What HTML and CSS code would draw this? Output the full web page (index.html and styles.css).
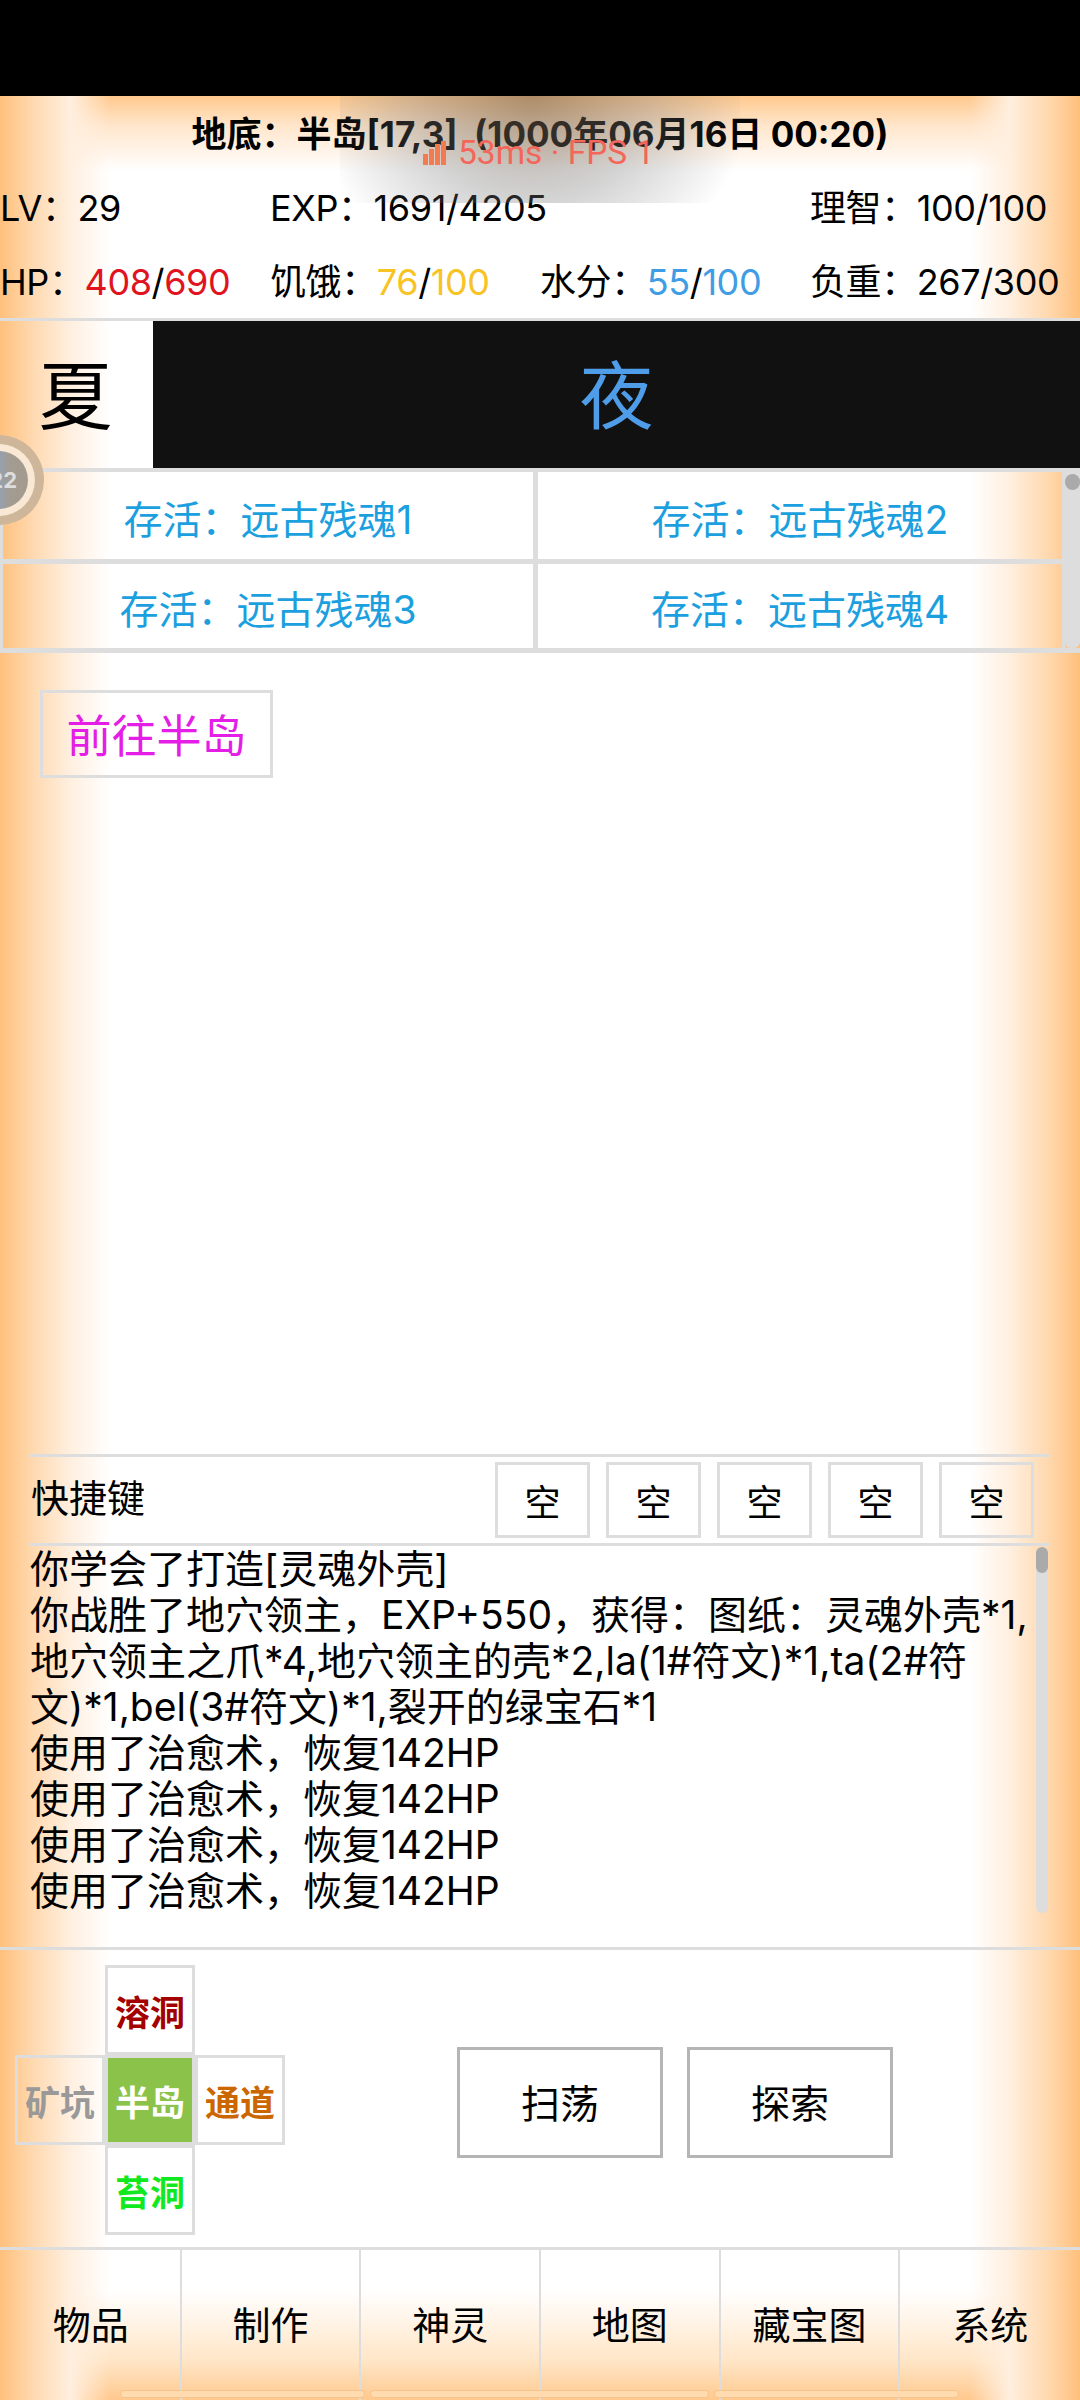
FILE: index.html
```html
<!DOCTYPE html>
<html lang="zh">
<head>
    <meta charset="UTF-8">
    <meta name="viewport" content="width=device-width, initial-scale=1.0">
    <title>地底</title>
    <link rel="stylesheet" href="styles.css">
</head>
<body>
    <div class="topbar"></div>
    <div class="page">
        <div class="title">地底：半岛[17,3]&nbsp; (1000年06月16日 00:20)</div>
        <div class="stats">
            <div>LV：29</div>
            <div class="wide">EXP：1691/4205</div>
            <div>理智：100/100</div>
            <div>HP：<span class="red">408</span>/<span class="red">690</span></div>
            <div>饥饿：<span class="yellow">76</span>/<span class="yellow">100</span></div>
            <div>水分：<span class="blue">55</span>/<span class="blue">100</span></div>
            <div>负重：267/300</div>
        </div>
        <div class="season">
            <div class="season-name">夏</div>
            <div class="daytime">夜</div>
        </div>
        <div class="tasks">
            <div class="task-grid">
                <div class="task">存活：远古残魂1</div>
                <div class="task">存活：远古残魂2</div>
                <div class="task">存活：远古残魂3</div>
                <div class="task">存活：远古残魂4</div>
            </div>
            <div class="scroll-y"><div class="thumb-small"></div></div>
        </div>
        <div class="main">
            <div class="go-btn">前往半岛</div>
        </div>
        <div class="shortcut">
            <div class="shortcut-label">快捷键</div>
            <div class="slots">
                <div class="slot">空</div>
                <div class="slot">空</div>
                <div class="slot">空</div>
                <div class="slot">空</div>
                <div class="slot">空</div>
            </div>
        </div>
        <div class="log">
            <div class="log-text">
                <div>你学会了打造[灵魂外壳]</div>
                <div>你战胜了地穴领主，EXP+550，获得：图纸：灵魂外壳*1,地穴领主之爪*4,地穴领主的壳*2,la(1#符文)*1,ta(2#符文)*1,bel(3#符文)*1,裂开的绿宝石*1</div>
                <div>使用了治愈术，恢复142HP</div>
                <div>使用了治愈术，恢复142HP</div>
                <div>使用了治愈术，恢复142HP</div>
                <div>使用了治愈术，恢复142HP</div>
            </div>
            <div class="log-scroll"><div class="log-thumb"></div></div>
        </div>
        <div class="controls">
            <div class="dpad">
                <div class="cell up">溶洞</div>
                <div class="cell left">矿坑</div>
                <div class="cell here">半岛</div>
                <div class="cell right">通道</div>
                <div class="cell down">苔洞</div>
            </div>
            <div class="actions">
                <div class="action">扫荡</div>
                <div class="action">探索</div>
            </div>
        </div>
        <div class="nav">
            <div class="nav-item">物品</div>
            <div class="nav-item">制作</div>
            <div class="nav-item">神灵</div>
            <div class="nav-item">地图</div>
            <div class="nav-item">藏宝图</div>
            <div class="nav-item">系统</div>
        </div>
    </div>

    <!-- overlays from the recorder -->
    <div class="fps">
        <svg class="fps-icon" width="24" height="24" viewBox="0 0 24 24">
            <rect x="0" y="13" width="5" height="11" fill="#f47a50"/>
            <rect x="6" y="8" width="5" height="16" fill="#f47a50"/>
            <rect x="12" y="3" width="5" height="21" fill="#f47a50"/>
            <rect x="18" y="0" width="5" height="24" fill="#f47a50"/>
        </svg>
        <span>53ms · FPS 1</span>
    </div>
    <div class="bubble"><div class="bubble-inner">22</div></div>
    <div class="home-bars">
        <div class="home-bar first"></div>
        <div class="home-bar second"></div>
        <div class="home-bar third"></div>
    </div>
</body>
</html>
```

FILE: styles.css
```css
* {
    box-sizing: border-box;
}
html, body {
    margin: 0;
    padding: 0;
}
body {
    position: relative;
    width: 1080px;
    height: 2400px;
    overflow: hidden;
    background: #fff;
    color: #000;
    font-family: Inter, "Noto Sans CJK SC", sans-serif;
    font-size: 36px;
}
.topbar {
    height: 96px;
    background: #000;
}
.page {
    position: relative;
    height: 2304px;
    display: flex;
    flex-direction: column;
    background:
        linear-gradient(to right, #ffc07c 0, #ffd9b0 33px, #ffefdf 70px, rgba(255,255,255,0) 110px),
        linear-gradient(to left, #ffc07c 0, #ffd9b0 33px, #ffefdf 70px, rgba(255,255,255,0) 110px),
        linear-gradient(to bottom, #ffc98e 0, #ffe6cc 30px, rgba(255,255,255,0) 75px),
        linear-gradient(to top, #ffc98e 0, #ffe6c8 40px, rgba(255,255,255,0) 110px),
        #fff;
}
.title {
    height: 74px;
    line-height: 76px;
    text-align: center;
    font-size: 35px;
    font-weight: 700;
    white-space: nowrap;
}
.stats {
    height: 148px;
    display: grid;
    grid-template-columns: 270px 270px 270px 270px;
    grid-auto-rows: 74px;
    line-height: 77px;
    letter-spacing: -0.4px;
    white-space: nowrap;
}
.stats .wide {
    grid-column: span 2;
}
.red { color: #e0131f; }
.yellow { color: #f7c325; }
.blue { color: #3f9de6; }
.season {
    height: 154px;
    display: flex;
    border-top: 3px solid #ddd;
    border-bottom: 4px solid #ddd;
}
.season-name {
    width: 153px;
    display: flex;
    align-items: center;
    justify-content: center;
    padding: 0 2px 8px 0;
    font-size: 74px;
}
.daytime {
    flex: 1;
    display: flex;
    align-items: center;
    justify-content: center;
    padding-bottom: 8px;
    background: #111;
    color: #4f9ce8;
    font-size: 74px;
}
.tasks {
    height: 181px;
    display: flex;
    border-bottom: 5px solid #ddd;
}
.task-grid {
    width: 1065px;
    display: grid;
    grid-template-columns: 533px 532px;
    grid-template-rows: 92px 84px;
}
.task {
    display: flex;
    align-items: center;
    justify-content: center;
    padding-top: 2px;
    border-left: 3px solid #ddd;
    border-bottom: 5px solid #ddd;
    color: #1c9fdf;
    font-size: 39px;
}
.task:nth-child(2), .task:nth-child(4) {
    border-left: 5px solid #ddd;
    border-right: 3px solid #ddd;
}
.task:nth-child(3), .task:nth-child(4) {
    border-bottom: 0;
}
.scroll-y {
    flex: 1;
    background: #ddd;
    border-radius: 0 0 6px 6px;
}
.thumb-small {
    height: 16px;
    margin-top: 2px;
    background: #aaa;
    border-radius: 8px;
}
.main {
    flex: 1;
    padding: 37px 40px 0 40px;
}
.go-btn {
    width: 233px;
    height: 88px;
    display: flex;
    align-items: center;
    justify-content: center;
    padding-bottom: 2px;
    border: 3px solid #ddd;
    color: #e41ee6;
    font-size: 45px;
}
.shortcut {
    height: 92px;
    margin: 0 30px;
    display: flex;
    align-items: center;
    justify-content: space-between;
    padding: 5px 16px 5px 1px;
    border-top: 3px solid #ddd;
    border-bottom: 3px solid #ddd;
}
.shortcut-label {
    font-size: 38px;
    margin-bottom: 10px;
}
.slots {
    display: flex;
    gap: 16px;
}
.slot {
    width: 95px;
    height: 76px;
    display: flex;
    align-items: center;
    justify-content: center;
    border: 3px solid #ddd;
    font-size: 36px;
}
.log {
    height: 401px;
    display: flex;
    padding: 0 32px 0 30px;
}
.log-text {
    width: 1006px;
    font-size: 39px;
    line-height: 46px;
}
.log-scroll {
    width: 12px;
    height: 366px;
    margin-top: 1px;
    background: #ddd;
    border-radius: 6px;
}
.log-thumb {
    height: 26px;
    background: #aaa;
    border-radius: 6px;
}
.controls {
    height: 303px;
    display: flex;
    border-top: 3px solid #ddd;
    border-bottom: 3px solid #ddd;
    padding: 15px 0 0 15px;
}
.dpad {
    display: grid;
    grid-template-columns: 90px 90px 90px;
    grid-template-rows: 90px 90px 90px;
}
.cell {
    display: flex;
    align-items: center;
    justify-content: center;
    border: 3px solid #ddd;
    font-size: 35px;
    font-weight: 700;
}
.up {
    grid-column: 2;
    grid-row: 1;
    background: #fff;
    color: #a30000;
}
.left {
    grid-column: 1;
    grid-row: 2;
    color: #999;
}
.here {
    grid-column: 2;
    grid-row: 2;
    background: #8bc34a;
    color: #fff;
}
.right {
    grid-column: 3;
    grid-row: 2;
    background: #fff;
    color: #cc6600;
}
.down {
    grid-column: 2;
    grid-row: 3;
    background: #fff;
    color: #12e81e;
}
.actions {
    display: flex;
    gap: 24px;
    margin: 82px 0 0 172px;
}
.action {
    width: 206px;
    height: 111px;
    display: flex;
    align-items: center;
    justify-content: center;
    padding-bottom: 4px;
    border: 3px solid #b5b5b5;
    font-size: 39px;
}
.nav {
    flex: none;
    height: 150px;
    display: flex;
    padding-left: 2px;
}
.nav-item {
    width: 180px;
    display: flex;
    align-items: center;
    justify-content: center;
    padding-bottom: 6px;
    border-right: 2px solid #ddd;
    font-size: 38px;
}
.nav-item:last-child {
    border-right: 0;
}

/* things lying over the page */
.fps {
    position: absolute;
    top: 96px;
    left: 340px;
    width: 400px;
    height: 107px;
    display: flex;
    align-items: center;
    gap: 11px;
    padding-top: 6px;
    padding-left: 83px;
    color: #f4665a;
    font-family: Roboto, sans-serif;
    font-size: 33.5px;
    white-space: nowrap;
    background: radial-gradient(ellipse 220px 190px at 48% 0, rgba(110,90,70,.55), rgba(120,120,120,.32) 55%, rgba(160,160,160,0) 100%);
}
.fps-icon {
    flex: none;
}
.bubble {
    position: absolute;
    top: 435px;
    left: -46px;
    width: 90px;
    height: 90px;
    display: flex;
    align-items: center;
    justify-content: center;
    border-radius: 50%;
    background: #f8e8d4;
    border: 9px solid rgba(170,140,105,.55);
}
.bubble-inner {
    width: 58px;
    height: 58px;
    line-height: 58px;
    padding-right: 11px;
    text-align: right;
    border-radius: 50%;
    background: linear-gradient(to right, #8fa5c0 40%, #a39b90 70%);
    color: #ddd;
    font-size: 22px;
    font-weight: 700;
}
.home-bars .home-bar {
    position: absolute;
    top: 2390px;
    height: 8px;
    border-radius: 4px;
    background: #ffdcb0;
    border: 1px solid #f6c48c;
}
.first { left: 120px; width: 245px; }
.second { left: 370px; width: 339px; }
.third { left: 714px; width: 245px; }
```
